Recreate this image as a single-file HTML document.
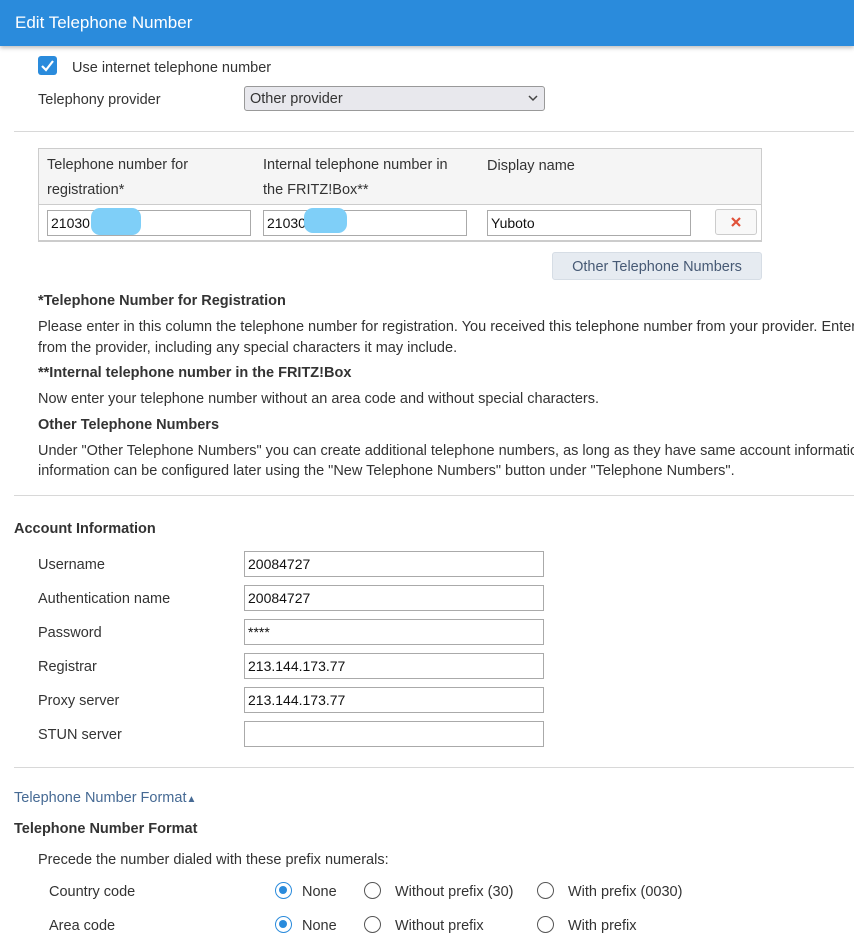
<!DOCTYPE html>
<html><head><meta charset="utf-8">
<style>
*{box-sizing:border-box;margin:0;padding:0}
body{width:854px;height:941px;overflow:hidden;background:#fff;font-family:"Liberation Sans",sans-serif;font-size:14.5px;color:#333;position:relative}
.a{position:absolute;white-space:nowrap;line-height:26px;padding-top:2px}
.s{position:absolute}
.hdr{position:absolute;left:0;top:0;width:854px;height:46px;background:#2a8bdc;box-shadow:0 2px 4px rgba(0,0,0,.25)}
.hdr span{position:absolute;left:15px;top:13px;color:#fff;font-size:17px}
.hr{position:absolute;left:14px;width:840px;height:1px;background:#d8d8d8}
.inp{position:absolute;height:26px;border:1px solid #aaa;background:#fff;font-size:14px;padding:5px 3px;line-height:14px;color:#111}
.b{font-weight:bold}
.radio{position:absolute;width:17px;height:17px;border:1.5px solid #555;border-radius:50%}
.radio.on{border-color:#2a8bdc}
.radio.on::after{content:"";position:absolute;left:3px;top:3px;width:8px;height:8px;border-radius:50%;background:#2a8bdc}
.blob{position:absolute;background:#7fcff8;border-radius:9px}
</style></head><body>
<div class="hdr"><span>Edit Telephone Number</span></div>

<div class="s" style="left:38px;top:56px;width:19px;height:19px;background:#2a8bdc;border-radius:3px"></div>
<svg class="s" style="left:38px;top:56px" width="19" height="19"><path d="M4 10 L8 14 L15 5" stroke="#fff" stroke-width="2.2" fill="none"/></svg>
<div class="a" style="left:72px;top:53px">Use internet telephone number</div>

<div class="a" style="left:38px;top:85px">Telephony provider</div>
<div class="s" style="left:244px;top:86px;width:301px;height:25px;background:#e8e8ed;border:1px solid #999;border-radius:3px"></div>
<div class="a" style="left:250px;top:84px">Other provider</div>
<svg class="s" style="left:528px;top:94px" width="10" height="8"><path d="M1 2 L5 6 L9 2" stroke="#444" stroke-width="1.5" fill="none"/></svg>

<div class="hr" style="top:131px"></div>

<div class="s" style="left:38px;top:148px;width:724px;height:94px;border:1px solid #ccc;border-bottom:2px solid #ccc;background:#fff"></div>
<div class="s" style="left:39px;top:149px;width:722px;height:56px;background:#f5f5f5;border-bottom:1px solid #ccc"></div>
<div class="a" style="left:47px;top:151px;line-height:25px">Telephone number for<br>registration*</div>
<div class="a" style="left:263px;top:151px;line-height:25px">Internal telephone number in<br>the FRITZ!Box**</div>
<div class="a" style="left:487px;top:151px">Display name</div>
<div class="inp" style="left:47px;top:210px;width:204px">21030</div>
<div class="blob" style="left:91px;top:208px;width:50px;height:27px"></div>
<div class="inp" style="left:263px;top:210px;width:204px">21030</div>
<div class="blob" style="left:304px;top:208px;width:43px;height:25px"></div>
<div class="inp" style="left:487px;top:210px;width:204px">Yuboto</div>
<div class="s" style="left:715px;top:209px;width:42px;height:26px;border:1px solid #ccc;border-radius:3px;background:#f8f8f8"></div>
<svg class="s" style="left:730px;top:216px" width="12" height="12"><path d="M2 2 L10 10 M10 2 L2 10" stroke="#e0523a" stroke-width="2.2"/></svg>

<div class="s" style="left:552px;top:252px;width:210px;height:28px;background:#e6ebf1;border:1px solid #d6dde5;border-radius:3px"></div>
<div class="a" style="left:552px;top:252px;width:210px;text-align:center;color:#475a75">Other Telephone Numbers</div>

<div class="a b" style="left:38px;top:286px">*Telephone Number for Registration</div>
<div class="a" style="left:38px;top:312px">Please enter in this column the telephone number for registration. You received this telephone number from your provider. Enter</div>
<div class="a" style="left:38px;top:333px">from the provider, including any special characters it may include.</div>
<div class="a b" style="left:38px;top:358px">**Internal telephone number in the FRITZ!Box</div>
<div class="a" style="left:38px;top:384px">Now enter your telephone number without an area code and without special characters.</div>
<div class="a b" style="left:38px;top:410px">Other Telephone Numbers</div>
<div class="a" style="left:38px;top:436px">Under "Other Telephone Numbers" you can create additional telephone numbers, as long as they have same account information</div>
<div class="a" style="left:38px;top:456px">information can be configured later using the "New Telephone Numbers" button under "Telephone Numbers".</div>

<div class="hr" style="top:495px"></div>
<div class="a b" style="left:14px;top:514px">Account Information</div>

<div class="a" style="left:38px;top:550px">Username</div>
<div class="inp" style="left:244px;top:551px;width:300px">20084727</div>
<div class="a" style="left:38px;top:584px">Authentication name</div>
<div class="inp" style="left:244px;top:585px;width:300px">20084727</div>
<div class="a" style="left:38px;top:618px">Password</div>
<div class="inp" style="left:244px;top:619px;width:300px">****</div>
<div class="a" style="left:38px;top:652px">Registrar</div>
<div class="inp" style="left:244px;top:653px;width:300px">213.144.173.77</div>
<div class="a" style="left:38px;top:686px">Proxy server</div>
<div class="inp" style="left:244px;top:687px;width:300px">213.144.173.77</div>
<div class="a" style="left:38px;top:720px">STUN server</div>
<div class="inp" style="left:244px;top:721px;width:300px"></div>

<div class="hr" style="top:767px"></div>
<div class="a" style="left:14px;top:783px;color:#466a94">Telephone Number Format<span style="font-size:10px">&#9650;</span></div>
<div class="a b" style="left:14px;top:814px">Telephone Number Format</div>
<div class="a" style="left:38px;top:845px">Precede the number dialed with these prefix numerals:</div>

<div class="a" style="left:49px;top:877px">Country code</div>
<div class="radio on" style="left:275px;top:882px"></div><div class="a" style="left:302px;top:877px">None</div>
<div class="radio" style="left:364px;top:882px"></div><div class="a" style="left:395px;top:877px">Without prefix (30)</div>
<div class="radio" style="left:537px;top:882px"></div><div class="a" style="left:568px;top:877px">With prefix (0030)</div>

<div class="a" style="left:49px;top:911px">Area code</div>
<div class="radio on" style="left:275px;top:916px"></div><div class="a" style="left:302px;top:911px">None</div>
<div class="radio" style="left:364px;top:916px"></div><div class="a" style="left:395px;top:911px">Without prefix</div>
<div class="radio" style="left:537px;top:916px"></div><div class="a" style="left:568px;top:911px">With prefix</div>
</body></html>
